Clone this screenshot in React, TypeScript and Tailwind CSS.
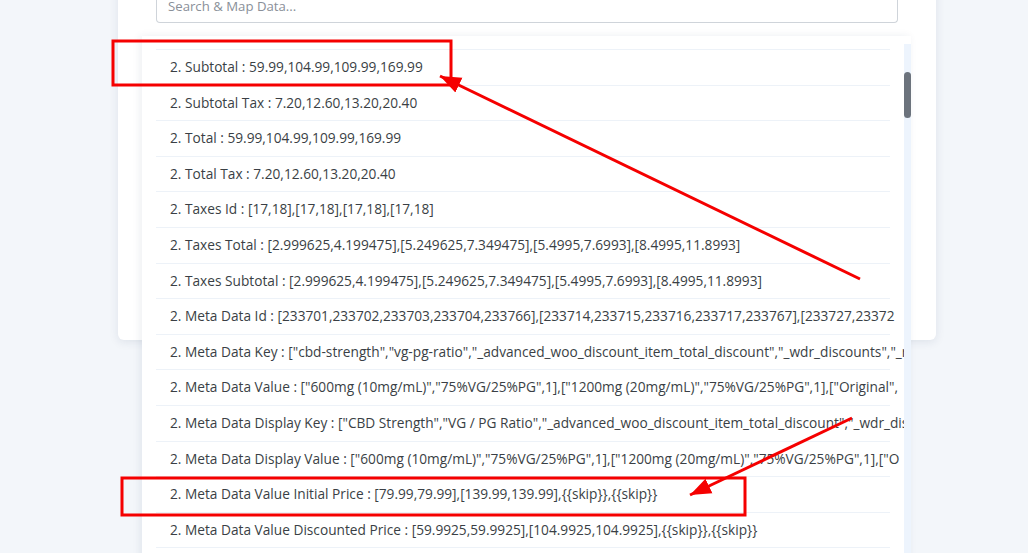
const rows = [
  '2. Subtotal : 59.99,104.99,109.99,169.99',
  '2. Subtotal Tax : 7.20,12.60,13.20,20.40',
  '2. Total : 59.99,104.99,109.99,169.99',
  '2. Total Tax : 7.20,12.60,13.20,20.40',
  '2. Taxes Id : [17,18],[17,18],[17,18],[17,18]',
  '2. Taxes Total : [2.999625,4.199475],[5.249625,7.349475],[5.4995,7.6993],[8.4995,11.8993]',
  '2. Taxes Subtotal : [2.999625,4.199475],[5.249625,7.349475],[5.4995,7.6993],[8.4995,11.8993]',
  '2. Meta Data Id : [233701,233702,233703,233704,233766],[233714,233715,233716,233717,233767],[233727,23372',
  '2. Meta Data Key : ["cbd-strength","vg-pg-ratio","_advanced_woo_discount_item_total_discount","_wdr_discounts","_re',
  '2. Meta Data Value : ["600mg (10mg/mL)","75%VG/25%PG",1],["1200mg (20mg/mL)","75%VG/25%PG",1],["Original",',
  '2. Meta Data Display Key : ["CBD Strength","VG / PG Ratio","_advanced_woo_discount_item_total_discount","_wdr_dis',
  '2. Meta Data Display Value : ["600mg (10mg/mL)","75%VG/25%PG",1],["1200mg (20mg/mL)","75%VG/25%PG",1],["O',
  '2. Meta Data Value Initial Price : [79.99,79.99],[139.99,139.99],{{skip}},{{skip}}',
  '2. Meta Data Value Discounted Price : [59.9925,59.9925],[104.9925,104.9925],{{skip}},{{skip}}',
  '2. Meta Data Value Discount : [20,20],[35,35],{{skip}},{{skip}}',
];

export default function App() {
  return (
    <div className="relative h-[553px] w-[1028px] overflow-hidden bg-[#f3f6fa] font-['Open_Sans',sans-serif]">
      {/* card behind the dropdown */}
      <div className="relative ml-[118px] mt-[-20px] h-[360px] w-[818px] rounded-b-md bg-white shadow-[0_2px_10px_rgba(30,50,90,0.10)]">
        <div className="px-[38px] pt-[12px]">
          <div className="flex h-[31px] items-center rounded-b-[4px] border border-t-0 border-[#cfd4da] px-[11px] text-[13.2px] text-[#8a9099]">
            Search &amp; Map Data...
          </div>
        </div>

        {/* dropdown list */}
        <div className="absolute left-[24px] top-[56px] h-[600px] w-[769px] overflow-hidden bg-white shadow-[-2px_0_8px_rgba(30,50,90,0.08)]">
          <div className="ml-[14px] mt-[13px] w-[734px]">
            {rows.map((r) => (
              <div
                key={r}
                className="flex h-[35.6px] items-center whitespace-nowrap border-t border-[#edf2f8] pl-[14px] text-[13.7px] text-[#3a3f45]"
              >
                {r}
              </div>
            ))}
          </div>
          <div className="absolute right-0 top-[8px] h-full w-[7px] bg-[#edf4fd]">
            <div className="mt-[28px] h-[46px] w-[7px] rounded-full bg-[#6c737d]" />
          </div>
        </div>
      </div>

      {/* annotations */}
      <svg className="pointer-events-none absolute inset-0" width="1028" height="553">
        <defs>
          <marker id="ah" markerWidth="8" markerHeight="8" refX="7" refY="3.5" orient="auto" markerUnits="strokeWidth">
            <path d="M0,0.8 L7,3.5 L0,6.2 Z" fill="#f50000" />
          </marker>
        </defs>
        <rect x="113" y="41" width="338" height="44" fill="none" stroke="#f50000" strokeWidth="3" />
        <line x1="860" y1="279" x2="440" y2="76" stroke="#f50000" strokeWidth="3" markerEnd="url(#ah)" />
        <rect x="122" y="478" width="623" height="37" fill="none" stroke="#f50000" strokeWidth="3" />
        <line x1="852" y1="418" x2="690" y2="495" stroke="#f50000" strokeWidth="3" markerEnd="url(#ah)" />
      </svg>
    </div>
  );
}
